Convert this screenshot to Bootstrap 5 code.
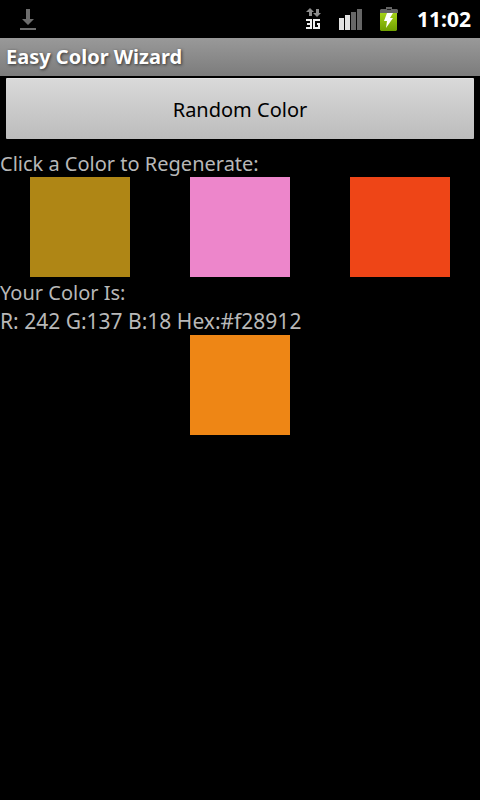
<!DOCTYPE html>
<html lang="en" data-bs-theme="dark">
<head>
<meta charset="utf-8">
<meta name="viewport" content="width=device-width, initial-scale=1">
<title>Easy Color Wizard</title>
<link href="https://cdn.jsdelivr.net/npm/bootstrap@5.3.0/dist/css/bootstrap.min.css" rel="stylesheet">
<style>
body { background: #000; color: #b8b8b8; font-family: "Noto Sans", "Open Sans", sans-serif; font-size: 20px; line-height: 27px; }
.status-bar { height: 38px; padding: 0 9px 0 18px; color: #fff; }
.clock { font-size: 21px; font-weight: 700; margin-left: 2px; }
.status-icons { gap: 17px; }
.title-bar { height: 38px; padding: 0 6px; background: linear-gradient(#999, #7c7c7c); }
.app-title { font-size: 20px; font-weight: 700; line-height: 37px; color: #fff; text-shadow: 1px 1px 3px #333; }
.random-wrap { padding: 2px 6px 9px; }
.random-btn, .random-btn:hover { height: 61px; border: 0; border-top: 1px solid #e4e4e4; border-radius: 1px; padding: 1px 0 0; background: linear-gradient(#d9d9d9, #bcbcbc); color: #000; font-size: 20px; }
.text-line { margin: 0; padding-top: 2px; }
.color-value { font-size: 21px; }
.swatch { width: 100px; height: 100px; border: 0; border-radius: 0; padding: 0; }
.swatch-gold { background: #af8615; }
.swatch-pink { background: #ed86cb; }
.swatch-red { background: #ee4517; }
.swatch-result { background: #ee8615; }
</style>
<script src="https://cdn.jsdelivr.net/npm/bootstrap@5.3.0/dist/js/bootstrap.bundle.min.js"></script>
</head>
<body>
<div class="status-bar d-flex align-items-center justify-content-between">
  <svg width="20" height="38" viewBox="0 0 20 38" role="img" aria-label="Download">
    <path d="M8 9h4v10h4l-6 6-6-6h4zM2 28h16v2H2z" fill="#6d6d6d"/>
  </svg>
  <div class="status-icons d-flex align-items-center">
    <svg width="16" height="38" viewBox="0 0 16 38" role="img" aria-label="3G data">
      <path d="M4 8l4 4H6v4H3v-4H0zM10 9h3v4h2l-4 4-4-4h3z" fill="#8c8c8c"/>
      <path d="M0 20h5v8H0M1 24h4M14 20H8v8h5v-4h-2" fill="none" stroke="#eee" stroke-width="2"/>
    </svg>
    <svg width="24" height="38" viewBox="0 0 24 38" role="img" aria-label="Signal strength">
      <path d="M0 18h5v12H0zM6 15h5v15H6z" fill="#e2e2e2"/>
      <path d="M12 12h5v18h-5zM18 9h5v21h-5z" fill="#666"/>
    </svg>
    <svg width="18" height="38" viewBox="0 0 18 38" role="img" aria-label="Battery charging">
      <defs><linearGradient id="charge" x2="0" y2="1"><stop stop-color="#a5d218"/><stop offset="1" stop-color="#6f9f00"/></linearGradient></defs>
      <path d="M6 7h6v2h5l1 1v3H0v-3l1-1h5z" fill="#656565"/>
      <path d="M7 9h4v1H7z" fill="#222"/>
      <path d="M0 13h17v17l-1 1H1l-1-1z" fill="url(#charge)"/>
      <path d="M7 13h6l-3 5h3L6 28l1-7H4z" fill="#fff"/>
    </svg>
    <span class="clock">11:02</span>
  </div>
</div>
<header class="title-bar">
  <h1 class="app-title m-0">Easy Color Wizard</h1>
</header>
<main>
  <div class="random-wrap"><button type="button" class="btn random-btn w-100">Random Color</button></div>
  <p class="text-line" id="pick-label">Click a Color to Regenerate:</p>
  <div class="row g-0" role="group" aria-labelledby="pick-label">
    <div class="col d-flex justify-content-center"><button type="button" class="btn swatch swatch-gold" aria-label="Gold"></button></div>
    <div class="col d-flex justify-content-center"><button type="button" class="btn swatch swatch-pink" aria-label="Pink"></button></div>
    <div class="col d-flex justify-content-center"><button type="button" class="btn swatch swatch-red" aria-label="Red"></button></div>
  </div>
  <p class="text-line">Your Color Is:</p>
  <p class="text-line color-value">R: 242 G:137 B:18 Hex:#f28912</p>
  <div class="swatch swatch-result mx-auto"></div>
</main>
</body>
</html>
